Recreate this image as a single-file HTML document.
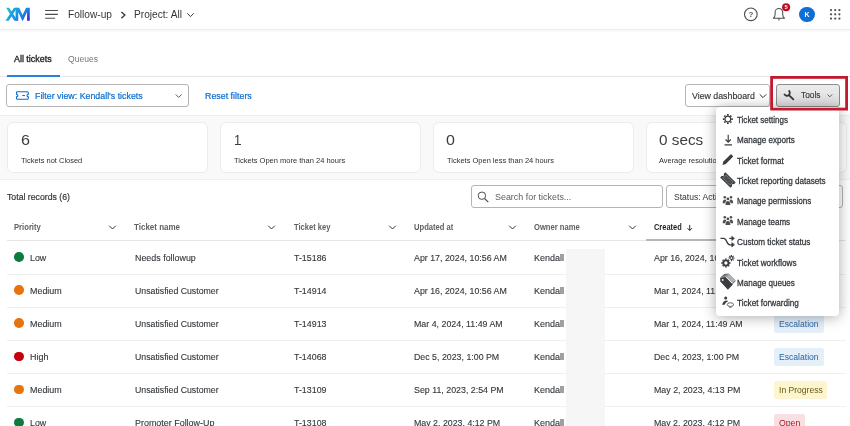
<!DOCTYPE html>
<html><head><meta charset="utf-8">
<style>
*{box-sizing:border-box;margin:0;padding:0}
html,body{width:850px;height:426px;overflow:hidden;background:#fff;font-family:"Liberation Sans",sans-serif;color:#32363a}
.a{position:absolute;white-space:nowrap}
.tx{transform-origin:0 50%}
.box{border:1px solid #b4b4b4;border-radius:3px;background:#fff}
#L{position:absolute;left:0;top:0;width:850px;height:426px;will-change:transform;transform:translateZ(0)}
</style></head><body><div id="L">
<!-- header bar -->
<div class="a" style="left:0;top:0;width:850px;height:29.6px;background:#fff;border-bottom:1px solid #ededed;box-shadow:0 1px 2px rgba(0,0,0,.05)"></div>
<svg class="a" style="left:4px;top:5px" width="29" height="19" viewBox="0 0 29 19">
<defs><linearGradient id="xg" gradientUnits="userSpaceOnUse" x1="2" y1="1" x2="24" y2="19"><stop offset="0.05" stop-color="#20ceb4"/><stop offset=".36" stop-color="#1a9de8"/><stop offset=".7" stop-color="#1f7ae2"/><stop offset=".97" stop-color="#4316d8"/></linearGradient></defs>
<clipPath id="xc"><rect x="0" y="2.8" width="29" height="12.9"/></clipPath><g clip-path="url(#xc)"><path d="M2.95 1.8L12.65 16.7M12.2 1.8L2.5 16.7" stroke="url(#xg)" stroke-width="2.7" fill="none"/><path d="M12.9 17V1L18.6 13.2L24.4 1V17" stroke="url(#xg)" stroke-width="2.7" fill="none" stroke-linejoin="miter" stroke-miterlimit="10"/></g></svg>
<svg class="a" style="left:44px;top:8px" width="16" height="13" viewBox="0 0 16 13"><path d="M1.1 2.5h12.8M1.1 6.3h12.8M1.1 10.2h10" stroke="#4b4e51" stroke-width="1.15" fill="none"/></svg>
<svg class="a" style="left:119px;top:10px" width="9" height="10" viewBox="0 0 9 10"><path d="M2.4 1.9l3.5 3.2-3.5 3.2" stroke="#32363a" stroke-width="1.3" fill="none"/></svg>
<svg class="a" style="left:186px;top:12px" width="9" height="6" viewBox="0 0 9 6"><path d="M1.2 1.3l3.3 3.3 3.3-3.3" stroke="#32363a" stroke-width="1" fill="none"/></svg>
<!-- right header icons -->
<svg class="a" style="left:742px;top:6px" width="18" height="18" viewBox="0 0 18 18"><circle cx="8.85" cy="8.3" r="6.35" stroke="#4b4e51" stroke-width="1.1" fill="none"/><text x="8.85" y="11.2" font-size="8" font-weight="bold" text-anchor="middle" fill="#55585b" font-family="Liberation Sans">?</text></svg>
<svg class="a" style="left:770px;top:2px" width="24" height="22" viewBox="0 0 24 22"><path d="M3.3 16.3h11.2c-1.3-.9-1.8-2.2-1.8-3.7v-2.3a3.8 3.8 0 0 0-7.6 0v2.3c0 1.5-.5 2.8-1.8 3.7zM8.9 16.6v1.9" stroke="#4b4e51" stroke-width="1.05" fill="none" stroke-linejoin="round"/><circle cx="16.1" cy="5.2" r="4.05" fill="#c4081f"/><text x="16.1" y="7.3" font-size="5.8" font-weight="bold" text-anchor="middle" fill="#fff" font-family="Liberation Sans">5</text></svg>
<div class="a" style="left:799.3px;top:6.6px;width:15.4px;height:15.4px;border-radius:50%;background:#0f6fd6;color:#fff;font-size:7px;line-height:15.4px;text-align:center;font-weight:bold">K</div>
<svg class="a" style="left:829px;top:8px" width="13" height="13" viewBox="0 0 13 13" fill="#4b4e51"><circle cx="2" cy="2.1" r="1.1"/><circle cx="6.2" cy="2.1" r="1.1"/><circle cx="10.4" cy="2.1" r="1.1"/><circle cx="2" cy="6.3" r="1.1"/><circle cx="6.2" cy="6.3" r="1.1"/><circle cx="10.4" cy="6.3" r="1.1"/><circle cx="2" cy="10.6" r="1.1"/><circle cx="6.2" cy="10.6" r="1.1"/><circle cx="10.4" cy="10.6" r="1.1"/></svg>
<!-- tabs -->
<div class="a" style="left:0;top:76px;width:850px;height:1px;background:#e6e6e6"></div>
<div class="a" style="left:7px;top:75px;width:52.7px;height:2px;background:#2a7de2"></div>
<!-- filter row -->
<div class="a box" style="left:6px;top:83.7px;width:183px;height:23.4px"></div>
<svg class="a" style="left:14.5px;top:90.3px" width="15" height="11" viewBox="0 0 15 11"><path d="M1.5 2.7a1 1 0 0 1 1-1h9.8a1 1 0 0 1 1 1v1.5a1.3 1.3 0 0 0 0 2.6v1.5a1 1 0 0 1-1 1H2.5a1 1 0 0 1-1-1V6.8a1.3 1.3 0 0 0 0-2.6z" stroke="#0b6ed0" stroke-width="1.1" fill="none"/><path d="M7.3 5.5h2.6" stroke="#0b6ed0" stroke-width="1.1"/></svg>
<svg class="a" style="left:174px;top:92px" width="10" height="7" viewBox="0 0 10 7"><path d="M1.7 2.4l3 3 3-3" stroke="#0b6ed0" stroke-width="1" fill="none"/></svg>
<div class="a box" style="left:684.5px;top:83.7px;width:85.5px;height:23.4px"></div>
<svg class="a" style="left:758px;top:93px" width="10" height="7" viewBox="0 0 10 7"><path d="M1.7 1.3l3.3 3.3 3.3-3.3" stroke="#32363a" stroke-width="1" fill="none"/></svg>
<!-- tools btn -->
<div class="a" style="left:776px;top:83.8px;width:64px;height:23.2px;border:1px solid #8c8c8c;border-radius:3px;background:linear-gradient(#ececec,#dddddd)"></div>
<svg class="a" style="left:780px;top:86px" width="20" height="18" viewBox="0 0 20 18"><path d="M4.2 7.8A2.9 2.9 0 1 0 8.6 4.5" stroke="#34373a" stroke-width="1.75" fill="none"/><path d="M8.9 9.1L13.3 13.3" stroke="#34373a" stroke-width="1.8" fill="none" stroke-linecap="round"/></svg>
<svg class="a" style="left:826px;top:93px" width="8" height="6" viewBox="0 0 8 6"><path d="M1.5 1.5l2.3 2.3L6.1 1.5" stroke="#4b4e51" stroke-width=".9" fill="none"/></svg>
<!-- stats band -->
<div class="a" style="left:0;top:114.5px;width:850px;height:65px;background:#f9f9f9;border-top:1px solid #efefef;border-bottom:1px solid #efefef"></div>
<div class="a" style="left:7px;top:122px;width:200.5px;height:50.5px;background:#fff;border:1px solid #ececec;border-radius:6px"></div>
<div class="a" style="left:220px;top:122px;width:200.5px;height:50.5px;background:#fff;border:1px solid #ececec;border-radius:6px"></div>
<div class="a" style="left:433px;top:122px;width:200.5px;height:50.5px;background:#fff;border:1px solid #ececec;border-radius:6px"></div>
<div class="a" style="left:646px;top:122px;width:200.5px;height:50.5px;background:#fff;border:1px solid #ececec;border-radius:6px"></div>
<!-- search / status -->
<div class="a box" style="left:471px;top:185px;width:191.5px;height:23.3px"></div>
<svg class="a" style="left:477px;top:190px" width="13" height="13" viewBox="0 0 13 13"><circle cx="4.9" cy="5.7" r="3.7" stroke="#4b4e51" stroke-width="1" fill="none"/><path d="M7.6 8.5l3.7 3.6" stroke="#4b4e51" stroke-width="1.1"/></svg>
<div class="a box" style="left:665.8px;top:185px;width:177.5px;height:23.3px"></div>
<!-- table header -->
<svg class="a" style="left:108px;top:224px" width="10" height="7" viewBox="0 0 10 7"><path d="M1.2 1.7l3.3 3.3 3.3-3.3" stroke="#32363a" stroke-width="1" fill="none"/></svg>
<svg class="a" style="left:267px;top:224px" width="10" height="7" viewBox="0 0 10 7"><path d="M1.2 1.7l3.3 3.3 3.3-3.3" stroke="#32363a" stroke-width="1" fill="none"/></svg>
<svg class="a" style="left:388px;top:224px" width="10" height="7" viewBox="0 0 10 7"><path d="M1.2 1.7l3.3 3.3 3.3-3.3" stroke="#32363a" stroke-width="1" fill="none"/></svg>
<svg class="a" style="left:508px;top:224px" width="10" height="7" viewBox="0 0 10 7"><path d="M1.2 1.7l3.3 3.3 3.3-3.3" stroke="#32363a" stroke-width="1" fill="none"/></svg>
<svg class="a" style="left:627.5px;top:224px" width="10" height="7" viewBox="0 0 10 7"><path d="M1.2 1.7l3.3 3.3 3.3-3.3" stroke="#32363a" stroke-width="1" fill="none"/></svg>
<svg class="a" style="left:686px;top:223px" width="8" height="9" viewBox="0 0 8 9"><path d="M3.7 1.9v5.4M1.5 5.2l2.2 2.3 2.2-2.3" stroke="#1d2125" stroke-width=".95" fill="none"/></svg>
<div class="a" style="left:7px;top:240.2px;width:839px;height:1px;background:#e5e5e5"></div>
<div class="a" style="left:646px;top:239.4px;width:120px;height:1.8px;background:#b6b6b6"></div>
<div class="a" style="left:234.6px;top:143.7px;width:6px;height:1.1px;background:#3a3d40"></div>
<div class="a" style="left:14.1px;top:252.37px;width:9.7px;height:9.7px;border-radius:50%;background:#0d7a3e"></div>
<div class="a" style="left:7px;top:273.65px;width:839px;height:1px;background:#efefef"></div>
<div class="a" style="left:14.1px;top:285.42px;width:9.7px;height:9.7px;border-radius:50%;background:#e8720c"></div>
<div class="a" style="left:7px;top:306.70px;width:839px;height:1px;background:#efefef"></div>
<div class="a" style="left:14.1px;top:318.47px;width:9.7px;height:9.7px;border-radius:50%;background:#e8720c"></div>
<div class="a" style="left:773.7px;top:315.32px;width:50.3px;height:17.2px;border-radius:2.5px;background:#e4eff9"></div>
<div class="a" style="left:7px;top:339.75px;width:839px;height:1px;background:#efefef"></div>
<div class="a" style="left:14.1px;top:351.52px;width:9.7px;height:9.7px;border-radius:50%;background:#c4000f"></div>
<div class="a" style="left:773.7px;top:348.38px;width:50.3px;height:17.2px;border-radius:2.5px;background:#e4eff9"></div>
<div class="a" style="left:7px;top:372.80px;width:839px;height:1px;background:#efefef"></div>
<div class="a" style="left:14.1px;top:384.57px;width:9.7px;height:9.7px;border-radius:50%;background:#e8720c"></div>
<div class="a" style="left:773.7px;top:381.42px;width:53.8px;height:17.2px;border-radius:2.5px;background:#fcf5cf"></div>
<div class="a" style="left:7px;top:405.85px;width:839px;height:1px;background:#efefef"></div>
<div class="a" style="left:14.1px;top:417.62px;width:9.7px;height:9.7px;border-radius:50%;background:#0d7a3e"></div>
<div class="a" style="left:773.7px;top:414.47px;width:31.3px;height:17.2px;border-radius:2.5px;background:#f7dfe2"></div>
<!-- redaction -->
<div class="a" style="left:566.3px;top:248.8px;width:38.7px;height:178px;background:#f6f6f6"></div>
<div class="a tx" style="left:68px;top:8.32px;font-size:11.5px;line-height:13.8px;color:#32363a;font-weight:normal;transform:scaleX(0.8825);">Follow-up</div>
<div class="a tx" style="left:134.3px;top:8.32px;font-size:11.5px;line-height:13.8px;color:#32363a;font-weight:normal;transform:scaleX(0.8817);">Project: All</div>
<div class="a tx" style="left:14.4px;top:53.79px;font-size:9.2px;line-height:11.04px;color:#1d2125;font-weight:normal;transform:scaleX(0.9688);-webkit-text-stroke:.35px #1d2125;">All tickets</div>
<div class="a tx" style="left:67.6px;top:53.79px;font-size:9.2px;line-height:11.04px;color:#747678;font-weight:normal;transform:scaleX(0.9320);">Queues</div>
<div class="a tx" style="left:35px;top:89.70px;font-size:9.4px;line-height:11.28px;color:#0b6ed0;font-weight:normal;transform:scaleX(0.9420);-webkit-text-stroke:.22px #0b6ed0;">Filter view: Kendall&#x27;s tickets</div>
<div class="a tx" style="left:204.5px;top:89.70px;font-size:9.4px;line-height:11.28px;color:#0b6ed0;font-weight:normal;transform:scaleX(0.9455);-webkit-text-stroke:.22px #0b6ed0;">Reset filters</div>
<div class="a tx" style="left:692.3px;top:89.60px;font-size:9.4px;line-height:11.28px;color:#32363a;font-weight:normal;transform:scaleX(0.9379);-webkit-text-stroke:.15px #32363a;">View dashboard</div>
<div class="a tx" style="left:801.2px;top:90.29px;font-size:9.2px;line-height:11.04px;color:#32363a;font-weight:normal;transform:scaleX(0.9043);-webkit-text-stroke:.15px #32363a;">Tools</div>
<div class="a tx" style="left:20.5px;top:130.90px;font-size:15.0px;line-height:18.0px;color:#3a3d40;font-weight:normal;transform:scaleX(1.0787);">6</div>
<div class="a tx" style="left:21.0px;top:155.72px;font-size:7.9px;line-height:9.48px;color:#2c2f32;font-weight:normal;transform:scaleX(0.9485);">Tickets not Closed</div>
<div class="a tx" style="left:234.0px;top:130.90px;font-size:15.0px;line-height:18.0px;color:#3a3d40;font-weight:normal;transform:scaleX(0.8509);">1</div>
<div class="a tx" style="left:233.8px;top:155.72px;font-size:7.9px;line-height:9.48px;color:#2c2f32;font-weight:normal;transform:scaleX(0.9520);">Tickets Open more than 24 hours</div>
<div class="a tx" style="left:446.2px;top:130.90px;font-size:15.0px;line-height:18.0px;color:#3a3d40;font-weight:normal;transform:scaleX(1.0667);">0</div>
<div class="a tx" style="left:446.8px;top:155.72px;font-size:7.9px;line-height:9.48px;color:#2c2f32;font-weight:normal;transform:scaleX(0.9480);">Tickets Open less than 24 hours</div>
<div class="a tx" style="left:658.6999999999999px;top:130.90px;font-size:15.0px;line-height:18.0px;color:#3a3d40;font-weight:normal;transform:scaleX(1.0194);">0 secs</div>
<div class="a tx" style="left:659.3px;top:155.72px;font-size:7.9px;line-height:9.48px;color:#2c2f32;font-weight:normal;transform:scaleX(0.94);">Average resolution time</div>
<div class="a tx" style="left:7.4px;top:190.52px;font-size:9.7px;line-height:11.64px;color:#32363a;font-weight:normal;transform:scaleX(0.9000);-webkit-text-stroke:.2px #32363a;">Total records (6)</div>
<div class="a tx" style="left:495px;top:190.71px;font-size:9.5px;line-height:11.4px;color:#5b5e61;font-weight:normal;transform:scaleX(0.9384);">Search for tickets...</div>
<div class="a tx" style="left:673.5px;top:190.71px;font-size:9.5px;line-height:11.4px;color:#32363a;font-weight:normal;transform:scaleX(0.9026);">Status: Acti</div>
<div class="a tx" style="left:14.4px;top:222.05px;font-size:8.5px;line-height:10.2px;color:#5e6165;font-weight:bold;transform:scaleX(0.9004);">Priority</div>
<div class="a tx" style="left:134.4px;top:222.05px;font-size:8.5px;line-height:10.2px;color:#5e6165;font-weight:bold;transform:scaleX(0.94);">Ticket name</div>
<div class="a tx" style="left:293.5px;top:222.05px;font-size:8.5px;line-height:10.2px;color:#5e6165;font-weight:bold;transform:scaleX(0.8909);">Ticket key</div>
<div class="a tx" style="left:413.9px;top:222.05px;font-size:8.5px;line-height:10.2px;color:#5e6165;font-weight:bold;transform:scaleX(0.8948);">Updated at</div>
<div class="a tx" style="left:533.5px;top:222.05px;font-size:8.5px;line-height:10.2px;color:#5e6165;font-weight:bold;transform:scaleX(0.8975);">Owner name</div>
<div class="a tx" style="left:653.7px;top:222.05px;font-size:8.5px;line-height:10.2px;color:#1d2125;font-weight:bold;transform:scaleX(0.8750);">Created</div>
<div class="a tx" style="left:30.3px;top:251.73px;font-size:9.5px;line-height:11.4px;color:#32363a;font-weight:normal;transform:scaleX(0.9290);-webkit-text-stroke:.12px #32363a;">Low</div>
<div class="a tx" style="left:134.5px;top:251.73px;font-size:9.5px;line-height:11.4px;color:#32363a;font-weight:normal;transform:scaleX(0.9358);-webkit-text-stroke:.12px #32363a;">Needs followup</div>
<div class="a tx" style="left:293.5px;top:251.73px;font-size:9.5px;line-height:11.4px;color:#32363a;font-weight:normal;transform:scaleX(0.9319);-webkit-text-stroke:.12px #32363a;">T-15186</div>
<div class="a tx" style="left:413.9px;top:251.73px;font-size:9.5px;line-height:11.4px;color:#32363a;font-weight:normal;transform:scaleX(0.9296);-webkit-text-stroke:.12px #32363a;">Apr 17, 2024, 10:56 AM</div>
<div class="a tx" style="left:533.5px;top:251.73px;font-size:9.5px;line-height:11.4px;color:#32363a;font-weight:normal;transform:scaleX(0.9494);-webkit-text-stroke:.12px #32363a;">Kendall</div>
<div class="a tx" style="left:653.9px;top:251.73px;font-size:9.5px;line-height:11.4px;color:#32363a;font-weight:normal;transform:scaleX(0.9296);-webkit-text-stroke:.12px #32363a;">Apr 16, 2024, 10:56 AM</div>
<div class="a tx" style="left:30.3px;top:284.78px;font-size:9.5px;line-height:11.4px;color:#32363a;font-weight:normal;transform:scaleX(0.9380);-webkit-text-stroke:.12px #32363a;">Medium</div>
<div class="a tx" style="left:134.5px;top:284.78px;font-size:9.5px;line-height:11.4px;color:#32363a;font-weight:normal;transform:scaleX(0.9206);-webkit-text-stroke:.12px #32363a;">Unsatisfied Customer</div>
<div class="a tx" style="left:293.5px;top:284.78px;font-size:9.5px;line-height:11.4px;color:#32363a;font-weight:normal;transform:scaleX(0.9319);-webkit-text-stroke:.12px #32363a;">T-14914</div>
<div class="a tx" style="left:413.9px;top:284.78px;font-size:9.5px;line-height:11.4px;color:#32363a;font-weight:normal;transform:scaleX(0.9296);-webkit-text-stroke:.12px #32363a;">Apr 16, 2024, 10:56 AM</div>
<div class="a tx" style="left:533.5px;top:284.78px;font-size:9.5px;line-height:11.4px;color:#32363a;font-weight:normal;transform:scaleX(0.9494);-webkit-text-stroke:.12px #32363a;">Kendall</div>
<div class="a tx" style="left:653.9px;top:284.78px;font-size:9.5px;line-height:11.4px;color:#32363a;font-weight:normal;transform:scaleX(0.9296);-webkit-text-stroke:.12px #32363a;">Mar 1, 2024, 11:49 AM</div>
<div class="a tx" style="left:30.3px;top:317.83px;font-size:9.5px;line-height:11.4px;color:#32363a;font-weight:normal;transform:scaleX(0.9380);-webkit-text-stroke:.12px #32363a;">Medium</div>
<div class="a tx" style="left:134.5px;top:317.83px;font-size:9.5px;line-height:11.4px;color:#32363a;font-weight:normal;transform:scaleX(0.9206);-webkit-text-stroke:.12px #32363a;">Unsatisfied Customer</div>
<div class="a tx" style="left:293.5px;top:317.83px;font-size:9.5px;line-height:11.4px;color:#32363a;font-weight:normal;transform:scaleX(0.9319);-webkit-text-stroke:.12px #32363a;">T-14913</div>
<div class="a tx" style="left:413.9px;top:317.83px;font-size:9.5px;line-height:11.4px;color:#32363a;font-weight:normal;transform:scaleX(0.9296);-webkit-text-stroke:.12px #32363a;">Mar 4, 2024, 11:49 AM</div>
<div class="a tx" style="left:533.5px;top:317.83px;font-size:9.5px;line-height:11.4px;color:#32363a;font-weight:normal;transform:scaleX(0.9494);-webkit-text-stroke:.12px #32363a;">Kendall</div>
<div class="a tx" style="left:653.9px;top:317.83px;font-size:9.5px;line-height:11.4px;color:#32363a;font-weight:normal;transform:scaleX(0.9296);-webkit-text-stroke:.12px #32363a;">Mar 1, 2024, 11:49 AM</div>
<div class="a tx" style="left:779px;top:317.83px;font-size:9.5px;line-height:11.4px;color:#2b62a4;font-weight:normal;transform:scaleX(0.9032);">Escalation</div>
<div class="a tx" style="left:30.3px;top:350.88px;font-size:9.5px;line-height:11.4px;color:#32363a;font-weight:normal;transform:scaleX(0.94);-webkit-text-stroke:.12px #32363a;">High</div>
<div class="a tx" style="left:134.5px;top:350.88px;font-size:9.5px;line-height:11.4px;color:#32363a;font-weight:normal;transform:scaleX(0.9206);-webkit-text-stroke:.12px #32363a;">Unsatisfied Customer</div>
<div class="a tx" style="left:293.5px;top:350.88px;font-size:9.5px;line-height:11.4px;color:#32363a;font-weight:normal;transform:scaleX(0.9319);-webkit-text-stroke:.12px #32363a;">T-14068</div>
<div class="a tx" style="left:413.9px;top:350.88px;font-size:9.5px;line-height:11.4px;color:#32363a;font-weight:normal;transform:scaleX(0.9272);-webkit-text-stroke:.12px #32363a;">Dec 5, 2023, 1:00 PM</div>
<div class="a tx" style="left:533.5px;top:350.88px;font-size:9.5px;line-height:11.4px;color:#32363a;font-weight:normal;transform:scaleX(0.9494);-webkit-text-stroke:.12px #32363a;">Kendall</div>
<div class="a tx" style="left:653.9px;top:350.88px;font-size:9.5px;line-height:11.4px;color:#32363a;font-weight:normal;transform:scaleX(0.9272);-webkit-text-stroke:.12px #32363a;">Dec 4, 2023, 1:00 PM</div>
<div class="a tx" style="left:779px;top:350.88px;font-size:9.5px;line-height:11.4px;color:#2b62a4;font-weight:normal;transform:scaleX(0.9032);">Escalation</div>
<div class="a tx" style="left:30.3px;top:383.93px;font-size:9.5px;line-height:11.4px;color:#32363a;font-weight:normal;transform:scaleX(0.9380);-webkit-text-stroke:.12px #32363a;">Medium</div>
<div class="a tx" style="left:134.5px;top:383.93px;font-size:9.5px;line-height:11.4px;color:#32363a;font-weight:normal;transform:scaleX(0.9206);-webkit-text-stroke:.12px #32363a;">Unsatisfied Customer</div>
<div class="a tx" style="left:293.5px;top:383.93px;font-size:9.5px;line-height:11.4px;color:#32363a;font-weight:normal;transform:scaleX(0.9319);-webkit-text-stroke:.12px #32363a;">T-13109</div>
<div class="a tx" style="left:413.9px;top:383.93px;font-size:9.5px;line-height:11.4px;color:#32363a;font-weight:normal;transform:scaleX(0.9297);-webkit-text-stroke:.12px #32363a;">Sep 11, 2023, 2:54 PM</div>
<div class="a tx" style="left:533.5px;top:383.93px;font-size:9.5px;line-height:11.4px;color:#32363a;font-weight:normal;transform:scaleX(0.9494);-webkit-text-stroke:.12px #32363a;">Kendall</div>
<div class="a tx" style="left:653.9px;top:383.93px;font-size:9.5px;line-height:11.4px;color:#32363a;font-weight:normal;transform:scaleX(0.9295);-webkit-text-stroke:.12px #32363a;">May 2, 2023, 4:13 PM</div>
<div class="a tx" style="left:779px;top:383.93px;font-size:9.5px;line-height:11.4px;color:#6a5a10;font-weight:normal;transform:scaleX(0.9016);">In Progress</div>
<div class="a tx" style="left:30.3px;top:416.98px;font-size:9.5px;line-height:11.4px;color:#32363a;font-weight:normal;transform:scaleX(0.9290);-webkit-text-stroke:.12px #32363a;">Low</div>
<div class="a tx" style="left:134.5px;top:416.98px;font-size:9.5px;line-height:11.4px;color:#32363a;font-weight:normal;transform:scaleX(0.94);-webkit-text-stroke:.12px #32363a;">Promoter Follow-Up</div>
<div class="a tx" style="left:293.5px;top:416.98px;font-size:9.5px;line-height:11.4px;color:#32363a;font-weight:normal;transform:scaleX(0.9319);-webkit-text-stroke:.12px #32363a;">T-13108</div>
<div class="a tx" style="left:413.9px;top:416.98px;font-size:9.5px;line-height:11.4px;color:#32363a;font-weight:normal;transform:scaleX(0.9273);-webkit-text-stroke:.12px #32363a;">May 2, 2023, 4:12 PM</div>
<div class="a tx" style="left:533.5px;top:416.98px;font-size:9.5px;line-height:11.4px;color:#32363a;font-weight:normal;transform:scaleX(0.9494);-webkit-text-stroke:.12px #32363a;">Kendall</div>
<div class="a tx" style="left:653.9px;top:416.98px;font-size:9.5px;line-height:11.4px;color:#32363a;font-weight:normal;transform:scaleX(0.9273);-webkit-text-stroke:.12px #32363a;">May 2, 2023, 4:12 PM</div>
<div class="a tx" style="left:779px;top:416.98px;font-size:9.5px;line-height:11.4px;color:#b3151f;font-weight:normal;transform:scaleX(0.9161);">Open</div>
<!-- menu -->
<div class="a" style="left:716.4px;top:106.8px;width:122.7px;height:208.8px;background:#fff;border-radius:4px;box-shadow:0 1px 14px rgba(0,0,0,.34)"></div>
<div class="a tx" style="left:737.3px;top:114.87px;font-size:8.7px;line-height:10.44px;color:#32363a;font-weight:normal;transform:scaleX(0.9220);-webkit-text-stroke:.26px #32363a;">Ticket settings</div>
<div class="a tx" style="left:737.3px;top:135.27px;font-size:8.7px;line-height:10.44px;color:#32363a;font-weight:normal;transform:scaleX(0.9292);-webkit-text-stroke:.26px #32363a;">Manage exports</div>
<div class="a tx" style="left:737.3px;top:155.67px;font-size:8.7px;line-height:10.44px;color:#32363a;font-weight:normal;transform:scaleX(0.9360);-webkit-text-stroke:.26px #32363a;">Ticket format</div>
<div class="a tx" style="left:737.3px;top:176.07px;font-size:8.7px;line-height:10.44px;color:#32363a;font-weight:normal;transform:scaleX(0.9345);-webkit-text-stroke:.26px #32363a;">Ticket reporting datasets</div>
<div class="a tx" style="left:737.3px;top:196.47px;font-size:8.7px;line-height:10.44px;color:#32363a;font-weight:normal;transform:scaleX(0.9257);-webkit-text-stroke:.26px #32363a;">Manage permissions</div>
<div class="a tx" style="left:737.3px;top:216.87px;font-size:8.7px;line-height:10.44px;color:#32363a;font-weight:normal;transform:scaleX(0.9240);-webkit-text-stroke:.26px #32363a;">Manage teams</div>
<div class="a tx" style="left:737.3px;top:237.27px;font-size:8.7px;line-height:10.44px;color:#32363a;font-weight:normal;transform:scaleX(0.9384);-webkit-text-stroke:.26px #32363a;">Custom ticket status</div>
<div class="a tx" style="left:737.3px;top:257.67px;font-size:8.7px;line-height:10.44px;color:#32363a;font-weight:normal;transform:scaleX(0.9384);-webkit-text-stroke:.26px #32363a;">Ticket workflows</div>
<div class="a tx" style="left:737.3px;top:278.07px;font-size:8.7px;line-height:10.44px;color:#32363a;font-weight:normal;transform:scaleX(0.9292);-webkit-text-stroke:.26px #32363a;">Manage queues</div>
<div class="a tx" style="left:737.3px;top:298.47px;font-size:8.7px;line-height:10.44px;color:#32363a;font-weight:normal;transform:scaleX(0.9403);-webkit-text-stroke:.26px #32363a;">Ticket forwarding</div>
<!-- menu icons -->
<svg class="a" style="left:720px;top:112px" width="16" height="14" viewBox="0 0 16 14"><g transform="translate(7.85 7.1)" stroke="#3a3d40" fill="none"><circle r="2.9" stroke-width="1.3"/><g stroke-width="1.7"><path d="M0 -3.4V-5M0 3.4V5M-3.4 0H-5M3.4 0H5M2.4 -2.4L3.55 -3.55M-2.4 -2.4L-3.55 -3.55M2.4 2.4L3.55 3.55M-2.4 2.4L-3.55 3.55"/></g></g></svg>
<svg class="a" style="left:720px;top:133px" width="16" height="14" viewBox="0 0 16 14"><path d="M8.2 1.7v7.3M5.6 6.5l2.6 2.7 2.6-2.7M4.5 11.9h7.5" stroke="#3a3d40" stroke-width="1.15" fill="none"/></svg>
<svg class="a" style="left:720px;top:153px" width="16" height="14" viewBox="0 0 16 14"><path d="M2.5 11.9l.9-3.3 6.9-6.9a1 1 0 0 1 1.4 0l1 1a1 1 0 0 1 0 1.4l-6.9 6.9z" fill="#3a3d40"/></svg>
<svg class="a" style="left:718px;top:168px" width="22" height="24" viewBox="0 0 22 24"><g transform="translate(9.9 12) rotate(45)"><path d="M-7.3 -3.7h14.6v2.5a1.2 1.2 0 0 0 0 2.4v2.5h-14.6v-2.5a1.2 1.2 0 0 0 0-2.4z" fill="#3a3d40"/><rect x="-5.1" y="-2.2" width="10.2" height="4.4" fill="#4c4f52" stroke="#9a9c9e" stroke-width=".55"/></g></svg>
<svg class="a" style="left:720px;top:193.5px" width="16" height="13" viewBox="0 0 16 13" fill="#4d5053"><circle cx="4.8" cy="3.3" r="1.3"/><path d="M2.7 9.3c-.1-2.4.7-3.9 2.1-3.9s2.2 1.5 2.1 3.9z"/><circle cx="11" cy="3.3" r="1.3"/><path d="M8.9 9.3c-.1-2.4.7-3.9 2.1-3.9s2.2 1.5 2.1 3.9z"/><g stroke="#fff" stroke-width="1.1" paint-order="stroke"><circle cx="7.9" cy="4.9" r="1.4"/><path d="M5.5 11.1c-.1-2.7.8-4.2 2.4-4.2s2.5 1.5 2.4 4.2z"/></g></svg>
<svg class="a" style="left:720px;top:213.9px" width="16" height="13" viewBox="0 0 16 13" fill="#4d5053"><circle cx="4.8" cy="3.3" r="1.3"/><path d="M2.7 9.3c-.1-2.4.7-3.9 2.1-3.9s2.2 1.5 2.1 3.9z"/><circle cx="11" cy="3.3" r="1.3"/><path d="M8.9 9.3c-.1-2.4.7-3.9 2.1-3.9s2.2 1.5 2.1 3.9z"/><g stroke="#fff" stroke-width="1.1" paint-order="stroke"><circle cx="7.9" cy="4.9" r="1.4"/><path d="M5.5 11.1c-.1-2.7.8-4.2 2.4-4.2s2.5 1.5 2.4 4.2z"/></g></svg>
<svg class="a" style="left:718px;top:230px" width="22" height="20" viewBox="0 0 22 20"><path d="M2.5 8.4h3.2c1.7 0 2.3 1.3 3 3.2s1.6 3.2 3.3 3.2h3M11.3 8.4h3.7" stroke="#3a3d40" stroke-width="1.35" fill="none"/><path d="M13.8 6.2l2.7 2.2-2.7 2.2zM13.8 12.6l2.7 2.2-2.7 2.2z" fill="#3a3d40" stroke="#3a3d40" stroke-width=".6" stroke-linejoin="round"/></svg>
<svg class="a" style="left:718px;top:252px" width="22" height="20" viewBox="0 0 22 20"><g transform="translate(13.4 6.1)" stroke="#3a3d40" fill="none"><circle r="1.55" stroke-width="1.15"/><path stroke-width="1.2" d="M0 -2V-3.1M0 2V3.1M-2 0H-3.1M2 0H3.1M1.45 -1.45L2.2 -2.2M-1.45 -1.45L-2.2 -2.2M1.45 1.45L2.2 2.2M-1.45 1.45L-2.2 2.2"/></g><circle cx="7.9" cy="11" r="5.5" fill="#fff"/><g transform="translate(7.9 11)" stroke="#3a3d40" fill="none"><circle r="2.6" stroke-width="1.9"/><path stroke-width="1.8" d="M0 -3.3V-4.5M0 3.3V4.5M-3.3 0H-4.5M3.3 0H4.5M2.35 -2.35L3.2 -3.2M-2.35 -2.35L-3.2 -3.2M2.35 2.35L3.2 3.2M-2.35 2.35L-3.2 3.2"/></g></svg>
<svg class="a" style="left:718px;top:270px" width="22" height="22" viewBox="0 0 22 22"><path d="M5.8 4.5l4.8-.5 6.7 6.9-.9 1" stroke="#3a3d40" stroke-width=".8" fill="none"/><path d="M4.6 5.5l5-.5 6.7 6.9-.9 1" stroke="#3a3d40" stroke-width=".8" fill="none"/><path d="M3.4 6.5l5.2-.5 6.7 6.9-.9 1" stroke="#3a3d40" stroke-width=".8" fill="none"/><path d="M2.2 7.5l5.4-.5 7.3 7.4-5 5.4-7.6-8.2z" fill="#3a3d40"/><circle cx="4.7" cy="9.9" r=".95" fill="#fff"/></svg>
<svg class="a" style="left:718px;top:292px" width="22" height="20" viewBox="0 0 22 20"><circle cx="7.7" cy="6.1" r="1.5" fill="#3a3d40"/><path d="M4.1 12.8c.7-2.7 2.3-4.2 4.4-4.2.7 0 1.4.2 1.9.6-2.1.7-3.3 1.9-3.7 3.6z" fill="#3a3d40"/><ellipse cx="12.4" cy="12.6" rx="3.15" ry="1.85" stroke="#3a3d40" stroke-width=".8" fill="none"/><path d="M11.3 14.9l1.1 1.1 1.1-1.1" stroke="#3a3d40" stroke-width=".8" fill="#fff"/></svg>

<!-- red annotation -->
<svg class="a" style="left:768px;top:74px" width="82" height="39" viewBox="0 0 82 39"><rect x="3.6" y="3.4" width="75" height="31.7" fill="none" stroke="#c2192f" stroke-width="2.8"/></svg>
</div></body></html>
